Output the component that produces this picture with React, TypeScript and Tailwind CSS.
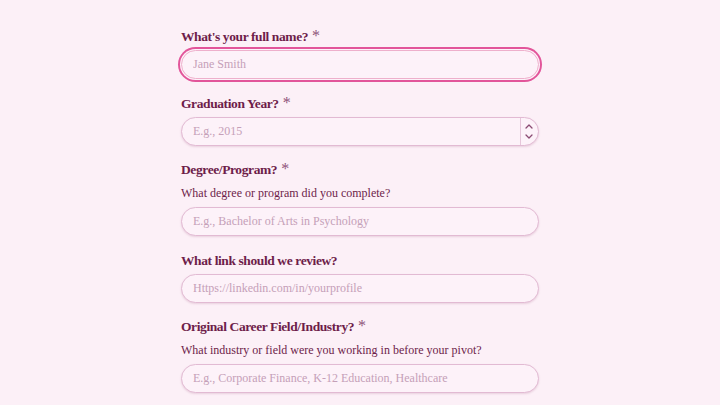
import React from "react";

const serif = { fontFamily: '"Liberation Serif", "Times New Roman", serif' };

function Label({ text, required }: { text: string; required?: boolean }) {
  return (
    <div className="h-[20px] leading-[20px] text-[13.5px] font-bold tracking-[-0.4px] text-[#6e1d4a] whitespace-nowrap">
      {text}
      {required && (
        <span className="ml-[4px] inline-block align-top text-[16px] leading-[17px] font-normal text-[#8f5279]">
          *
        </span>
      )}
    </div>
  );
}

function Helper({ text }: { text: string }) {
  return (
    <div className="mt-[3px] h-[20px] leading-[20px] text-[12px] text-[#6e1d4a] whitespace-nowrap">
      {text}
    </div>
  );
}

function Input({ placeholder, focused }: { placeholder: string; focused?: boolean }) {
  return (
    <input
      type="text"
      placeholder={placeholder}
      style={serif}
      className={
        "block w-full h-[29px] rounded-full bg-[#fdf2f9] px-[11px] text-[12px] text-[#6e1d4a] placeholder:text-[#c5a0b8] outline-none shadow-[0_1px_2px_rgba(150,60,110,0.18)] " +
        (focused
          ? "border border-[#eeb0cc] ring-2 ring-[#e2559a] ring-offset-1 ring-offset-[#fdf2f9]"
          : "border border-[#e2bad3]")
      }
    />
  );
}

function NumberInput({ placeholder }: { placeholder: string }) {
  return (
    <div className="flex h-[29px] w-full items-stretch rounded-full border border-[#e2bad3] bg-[#fdf2f9] shadow-[0_1px_2px_rgba(150,60,110,0.18)] overflow-hidden">
      <input
        type="text"
        placeholder={placeholder}
        style={serif}
        className="min-w-0 flex-1 bg-transparent px-[11px] text-[12px] text-[#6e1d4a] placeholder:text-[#c5a0b8] outline-none"
      />
      <div className="flex w-[18px] flex-col items-center justify-center gap-[5px] border-l border-[#e6c6da] pr-[2px]">
        <svg width="8" height="5" viewBox="0 0 8 5" fill="none">
          <path d="M1 4L4 1L7 4" stroke="#8a4a72" strokeWidth="1.3" strokeLinecap="round" strokeLinejoin="round" />
        </svg>
        <svg width="8" height="5" viewBox="0 0 8 5" fill="none">
          <path d="M1 1L4 4L7 1" stroke="#8a4a72" strokeWidth="1.3" strokeLinecap="round" strokeLinejoin="round" />
        </svg>
      </div>
    </div>
  );
}

export default function App() {
  return (
    <div className="min-h-[405px] w-full bg-[#fcf0f7]" style={serif}>
      <div className="mx-auto flex w-[358px] flex-col gap-[14.5px] pt-[27px] pb-[20px]">
        <div className="flex flex-col">
          <Label text="What's your full name?" required />
          <div className="mt-[3px]">
            <Input placeholder="Jane Smith" focused />
          </div>
        </div>
        <div className="flex flex-col">
          <Label text="Graduation Year?" required />
          <div className="mt-[3px]">
            <NumberInput placeholder="E.g., 2015" />
          </div>
        </div>
        <div className="flex flex-col">
          <Label text="Degree/Program?" required />
          <Helper text="What degree or program did you complete?" />
          <div className="mt-[4px]">
            <Input placeholder="E.g., Bachelor of Arts in Psychology" />
          </div>
        </div>
        <div className="flex flex-col">
          <Label text="What link should we review?" />
          <div className="mt-[3px]">
            <Input placeholder="Https://linkedin.com/in/yourprofile" />
          </div>
        </div>
        <div className="flex flex-col">
          <Label text="Original Career Field/Industry?" required />
          <Helper text="What industry or field were you working in before your pivot?" />
          <div className="mt-[4px]">
            <Input placeholder="E.g., Corporate Finance, K-12 Education, Healthcare" />
          </div>
        </div>
      </div>
    </div>
  );
}
